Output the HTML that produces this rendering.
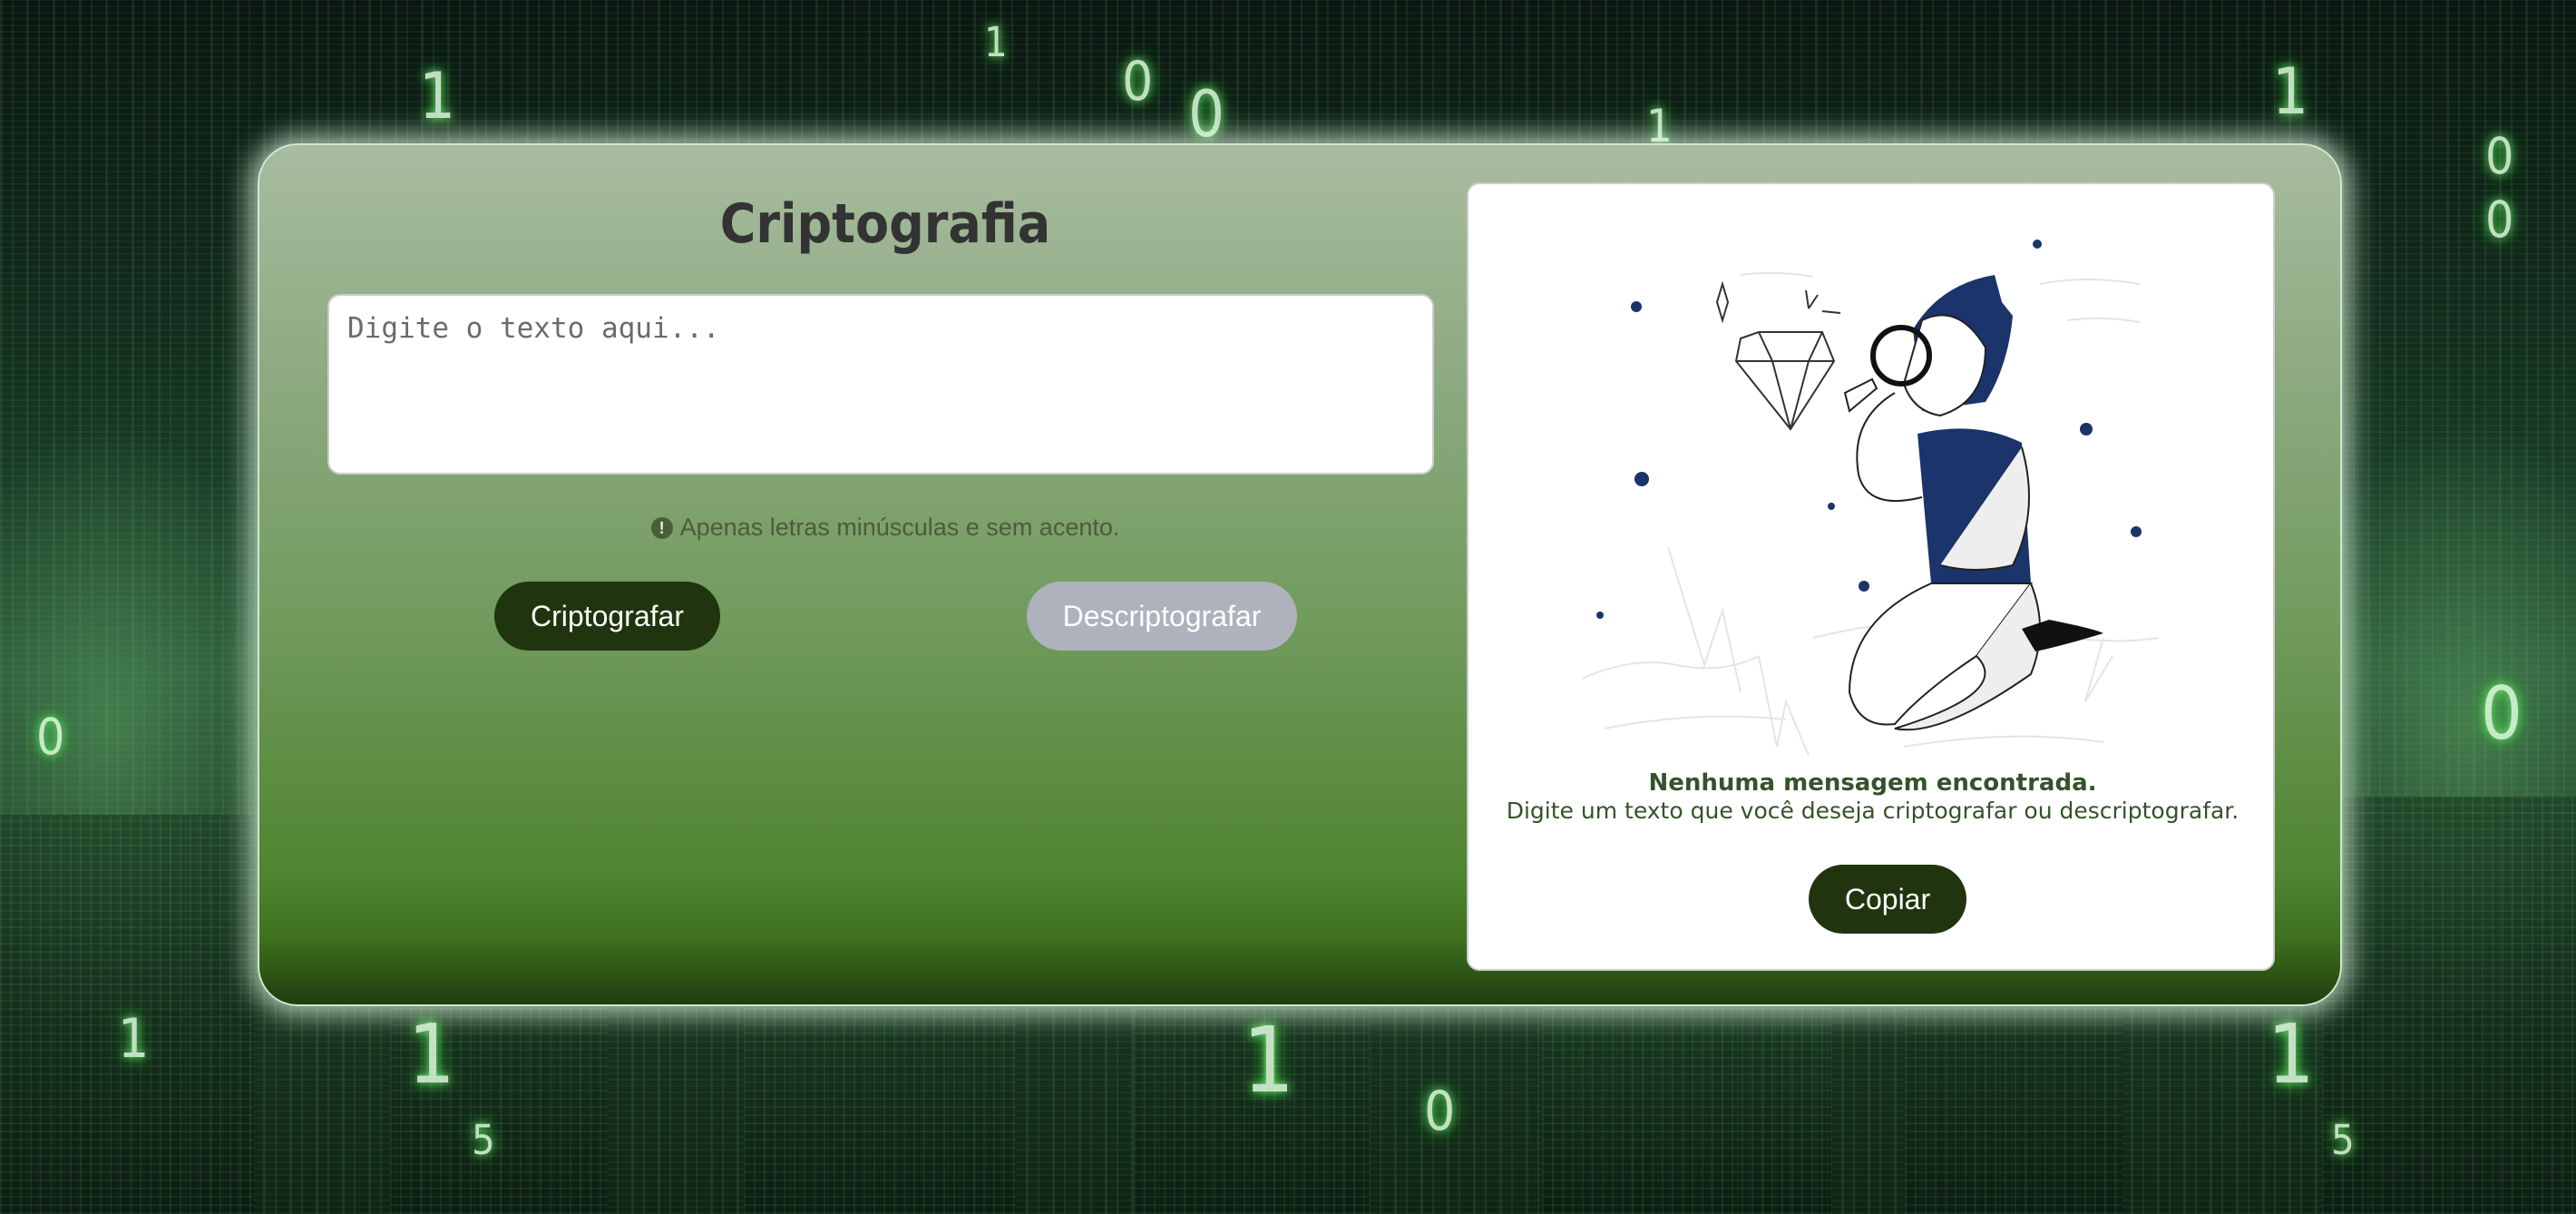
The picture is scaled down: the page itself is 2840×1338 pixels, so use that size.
<!DOCTYPE html>
<html><head><meta charset="utf-8"><style>
*{margin:0;padding:0;box-sizing:border-box}
html,body{width:2840px;height:1338px;overflow:hidden}
body{position:relative;font-family:"Liberation Sans",sans-serif;
background:
radial-gradient(ellipse 260px 420px at 120px 800px, rgba(110,180,110,.45), transparent 80%),
radial-gradient(ellipse 260px 420px at 2720px 800px, rgba(110,180,110,.45), transparent 80%),
repeating-linear-gradient(90deg, rgba(110,180,110,.12) 0 3px, transparent 3px 13px, rgba(140,210,140,.09) 13px 15px, transparent 15px 29px),
repeating-linear-gradient(0deg, rgba(130,200,130,.06) 0 2px, transparent 2px 7px),
linear-gradient(180deg,#0a1611 0%,#13301f 30%,#245135 55%,#1b3d24 75%,#0f2415 100%);}
.dg{position:absolute;color:#e0ffe0;font-family:"DejaVu Sans Condensed","Liberation Sans",sans-serif;text-shadow:0 0 10px #7f7,0 0 20px #3c3;opacity:.85}
.bld{position:absolute;bottom:0;opacity:.75;
background-image:repeating-linear-gradient(0deg,rgba(140,230,150,.10) 0 2px,transparent 2px 9px),repeating-linear-gradient(90deg,rgba(140,230,150,.10) 0 2px,transparent 2px 11px),linear-gradient(180deg,#1d3f26,#0b1a10)}
.card{position:absolute;left:284px;top:158px;width:2298px;height:951px;border-radius:44px;
background:linear-gradient(180deg,#a8bc9f 0%,#8fab83 25%,#729b5e 55%,#4f8430 85%,#3f721e 92%,#1f3e10 100%);
box-shadow:0 0 30px 8px rgba(230,255,230,.75);border:2px solid #cfe8cf}
h1{position:absolute;left:0;width:1380px;top:52px;text-align:center;font-size:60px;font-weight:bold;color:#333;font-family:"DejaVu Sans Condensed","Liberation Sans",sans-serif}
.ta{position:absolute;left:75px;top:164px;width:1220px;height:199px;background:#fff;border:2px solid #ccc;border-radius:14px;
font-family:"DejaVu Sans Mono","Liberation Mono",monospace;font-size:31px;color:#6b6b6b;padding:18px 20px}
.note{position:absolute;left:0;width:1380px;top:406px;text-align:center;font-size:27px;color:#4b5c3c}
.note i{display:inline-block;width:24px;height:24px;border-radius:50%;background:#4a5e3a;color:#cfe;font-style:normal;font-size:18px;line-height:24px;font-weight:bold;vertical-align:2px;margin-right:8px}
.btn{position:absolute;height:76px;border-radius:38px;color:#fff;font-size:32px;line-height:76px;text-align:center}
.panel{position:absolute;left:1331px;top:41px;width:891px;height:869px;background:#fff;border-radius:14px;border:2px solid #ccc}
.m1{position:absolute;left:0;width:891px;top:645px;text-align:center;font-size:26px;font-weight:bold;color:#33532a;font-family:"DejaVu Sans","Liberation Sans",sans-serif}
.m2{position:absolute;left:0;width:891px;top:676px;text-align:center;font-size:25px;color:#33532a;font-family:"DejaVu Sans","Liberation Sans",sans-serif}
</style></head><body>
<div class="bld" style="left:0;width:280px;height:440px"></div>
<div class="bld" style="left:430px;width:240px;height:330px"></div>
<div class="bld" style="left:820px;width:300px;height:280px"></div>
<div class="bld" style="left:1250px;width:260px;height:300px"></div>
<div class="bld" style="left:1700px;width:320px;height:260px"></div>
<div class="bld" style="left:2100px;width:240px;height:340px"></div>
<div class="bld" style="left:2560px;width:280px;height:460px"></div>
<div class="dg" style="left:462px;top:65px;font-size:70px">1</div>
<div class="dg" style="left:1237px;top:55px;font-size:60px">0</div>
<div class="dg" style="left:1310px;top:85px;font-size:70px">0</div>
<div class="dg" style="left:1085px;top:20px;font-size:45px">1</div>
<div class="dg" style="left:1815px;top:110px;font-size:50px">1</div>
<div class="dg" style="left:2505px;top:60px;font-size:70px">1</div>
<div class="dg" style="left:2740px;top:140px;font-size:55px">0</div>
<div class="dg" style="left:2740px;top:210px;font-size:55px">0</div>
<div class="dg" style="left:2735px;top:740px;font-size:80px">0</div>
<div class="dg" style="left:40px;top:780px;font-size:55px">0</div>
<div class="dg" style="left:450px;top:1110px;font-size:90px">1</div>
<div class="dg" style="left:1370px;top:1110px;font-size:100px">1</div>
<div class="dg" style="left:1570px;top:1190px;font-size:60px">0</div>
<div class="dg" style="left:2500px;top:1110px;font-size:90px">1</div>
<div class="dg" style="left:520px;top:1230px;font-size:45px">5</div>
<div class="dg" style="left:2570px;top:1230px;font-size:45px">5</div>
<div class="dg" style="left:130px;top:1110px;font-size:60px">1</div>
<div class="card">
<h1>Criptografia</h1>
<div class="ta">Digite o texto aqui...</div>
<div class="note"><i>!</i>Apenas letras minúsculas e sem acento.</div>
<div class="btn" style="left:259px;top:481px;width:249px;background:#20350f">Criptografar</div>
<div class="btn" style="left:846px;top:481px;width:298px;background:#adb2bc">Descriptografar</div>
<div class="panel">
<svg width="891" height="640" style="position:absolute;left:0;top:0" viewBox="0 0 891 640">
<g fill="none" stroke="#e4e4e4" stroke-width="2">
<path d="M125 545 Q180 520 230 530 T320 520"/><path d="M150 600 Q250 580 350 590"/><path d="M220 400 L260 530 L280 470 L300 560"/>
<path d="M320 520 L340 620 L350 570 L375 630"/><path d="M480 620 Q600 600 700 615"/><path d="M700 500 L680 570 L710 520"/>
<path d="M300 100 Q340 95 380 102"/><path d="M630 110 Q680 100 740 110"/><path d="M660 150 Q700 145 740 152"/><path d="M380 500 Q500 470 600 490 T760 500"/>
</g>
<g fill="#1b346b"><circle cx="185" cy="135" r="6"/><circle cx="627" cy="66" r="5"/><circle cx="681" cy="270" r="7"/><circle cx="191" cy="325" r="8"/><circle cx="400" cy="355" r="4"/><circle cx="736" cy="383" r="6"/><circle cx="436" cy="443" r="6"/><circle cx="145" cy="475" r="4"/></g>
<g fill="none" stroke="#333" stroke-width="2">
<path d="M300 170 L320 163 L390 163 L403 195 L355 270 L295 195 Z"/><path d="M295 195 L403 195 M320 163 L335 195 L355 270 M390 163 L375 195 L355 270"/>
<path d="M280 110 l6 20 l-6 20 l-6-20z"/><path d="M372 117 l3 20 M385 122 l-10 15 M390 140 l20 2"/>
</g>
<path d="M490 160 Q520 110 580 100 L588 130 L600 145 Q595 200 570 240 L500 250 Z" fill="#1b346b"/>
<path d="M500 150 Q540 130 570 180 Q570 240 520 255 Q490 250 480 220 Z" fill="#fff" stroke="#222" stroke-width="2"/>
<path d="M495 275 Q560 260 610 285 L620 440 Q560 450 510 440 Z" fill="#1b346b"/>
<path d="M510 440 Q420 480 420 560 Q430 600 470 595 Q500 560 560 520 L620 440 Z" fill="#fff" stroke="#222" stroke-width="2"/>
<path d="M560 520 Q600 560 470 600 Q520 610 620 540 Q640 490 620 440" fill="#eee" stroke="#222" stroke-width="2"/>
<path d="M610 490 L640 480 Q690 490 700 495 Q650 510 625 515 Z" fill="#111"/>
<path d="M470 230 Q420 260 430 320 Q440 360 500 345" fill="#fff" stroke="#222" stroke-width="2"/>
<path d="M610 290 Q630 360 600 420 Q560 430 520 420" fill="#eee" stroke="#222" stroke-width="2"/>
<path d="M415 230 L445 215 L450 225 L420 250 Z" fill="#fff" stroke="#222" stroke-width="2"/>
<circle cx="477" cy="189" r="31" fill="none" stroke="#111" stroke-width="6"/>
</svg>
<div class="m1">Nenhuma mensagem encontrada.</div>
<div class="m2">Digite um texto que você deseja criptografar ou descriptografar.</div>
<div class="btn" style="left:375px;top:750px;width:174px;background:#20350f">Copiar</div>
</div>
</div>
</body></html>
